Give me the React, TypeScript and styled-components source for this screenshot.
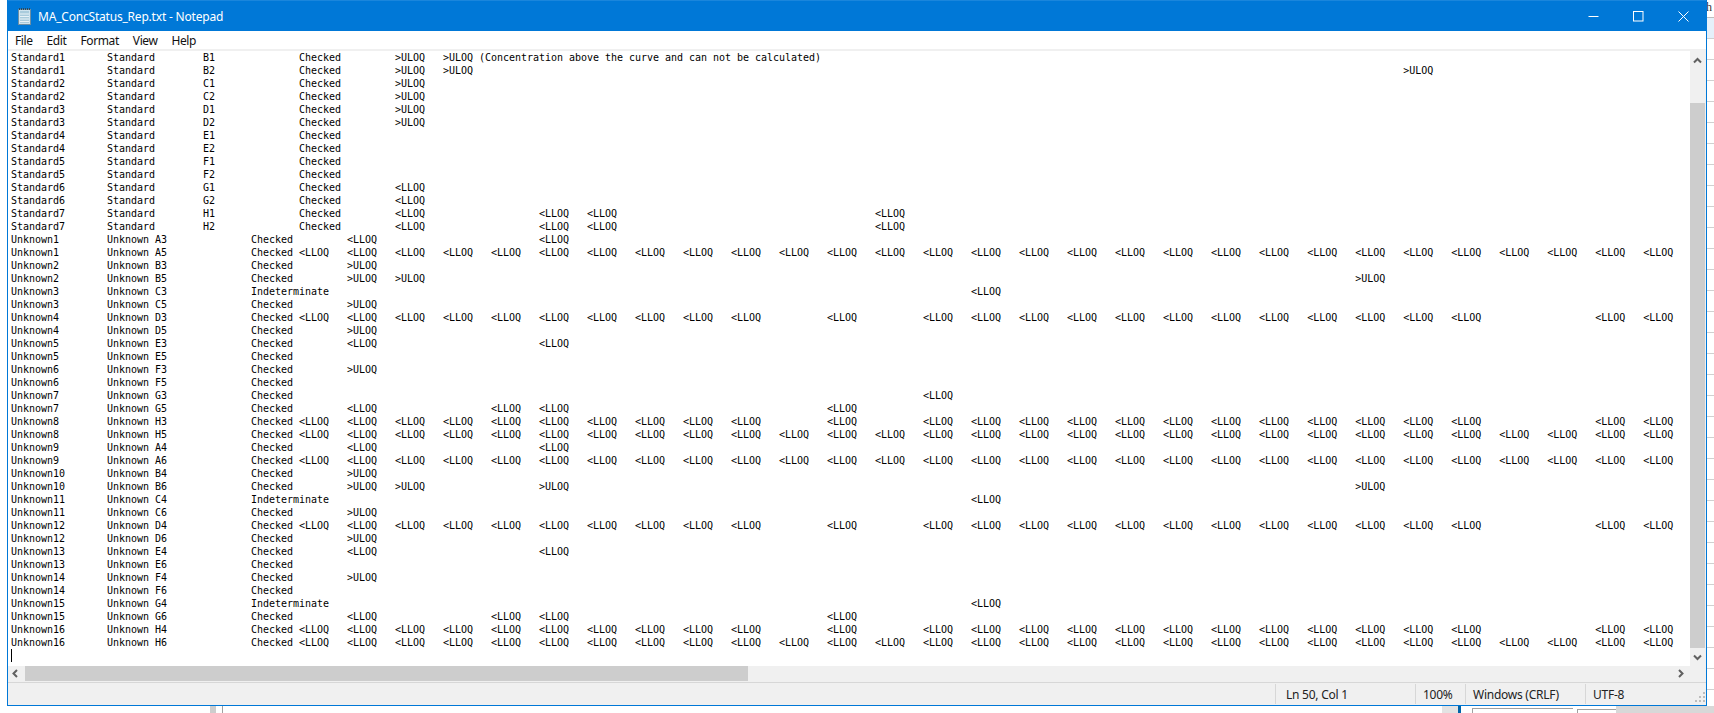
import React from 'react'
import styled, { createGlobalStyle } from 'styled-components'

const GlobalStyle = createGlobalStyle`
  html, body {
    margin: 0;
    padding: 0;
    background: #fff;
    overflow: hidden;
  }
`

const L = '<LLOQ'
const U = '>ULOQ'

// which report columns hold a value, counted from the tab stop after the status
const allCols = Array.from({ length: 29 }, (_, i) => i)
const fullRow = allCols.map(() => L)
const gapRow = allCols.map((i) => ([10, 12, 25, 26].includes(i) ? '' : L))
const sparse = (cells: Record<number, string>) => {
  const last = Math.max(-1, ...Object.keys(cells).map(Number))
  return Array.from({ length: last + 1 }, (_, i) => cells[i] ?? '')
}

const std = (name: string, well: string, cells: string[] = []) =>
  [name, 'Standard', well, '', 'Checked', '', ...cells].join('\t')
const unk = (name: string, well: string, cells: string[] = [], status = 'Checked') =>
  [name, `Unknown ${well}`, '', status, ...cells].join('\t')

const lines = [
  std('Standard1', 'B1', [U, `${U} (Concentration above the curve and can not be calculated)`]),
  std('Standard1', 'B2', sparse({ 0: U, 1: U, 21: U })),
  std('Standard2', 'C1', [U]),
  std('Standard2', 'C2', [U]),
  std('Standard3', 'D1', [U]),
  std('Standard3', 'D2', [U]),
  std('Standard4', 'E1'),
  std('Standard4', 'E2'),
  std('Standard5', 'F1'),
  std('Standard5', 'F2'),
  std('Standard6', 'G1', [L]),
  std('Standard6', 'G2', [L]),
  std('Standard7', 'H1', sparse({ 0: L, 3: L, 4: L, 10: L })),
  std('Standard7', 'H2', sparse({ 0: L, 3: L, 4: L, 10: L })),
  unk('Unknown1', 'A3', sparse({ 1: L, 5: L })),
  unk('Unknown1', 'A5', fullRow),
  unk('Unknown2', 'B3', sparse({ 1: U })),
  unk('Unknown2', 'B5', sparse({ 1: U, 2: U, 22: U })),
  unk('Unknown3', 'C3', sparse({ 13: L }), 'Indeterminate'),
  unk('Unknown3', 'C5', sparse({ 1: U })),
  unk('Unknown4', 'D3', gapRow),
  unk('Unknown4', 'D5', sparse({ 1: U })),
  unk('Unknown5', 'E3', sparse({ 1: L, 5: L })),
  unk('Unknown5', 'E5'),
  unk('Unknown6', 'F3', sparse({ 1: U })),
  unk('Unknown6', 'F5'),
  unk('Unknown7', 'G3', sparse({ 13: L })),
  unk('Unknown7', 'G5', sparse({ 1: L, 4: L, 5: L, 11: L })),
  unk('Unknown8', 'H3', gapRow),
  unk('Unknown8', 'H5', fullRow),
  unk('Unknown9', 'A4', sparse({ 1: L, 5: L })),
  unk('Unknown9', 'A6', fullRow),
  unk('Unknown10', 'B4', sparse({ 1: U })),
  unk('Unknown10', 'B6', sparse({ 1: U, 2: U, 5: U, 22: U })),
  unk('Unknown11', 'C4', sparse({ 13: L }), 'Indeterminate'),
  unk('Unknown11', 'C6', sparse({ 1: U })),
  unk('Unknown12', 'D4', gapRow),
  unk('Unknown12', 'D6', sparse({ 1: U })),
  unk('Unknown13', 'E4', sparse({ 1: L, 5: L })),
  unk('Unknown13', 'E6'),
  unk('Unknown14', 'F4', sparse({ 1: U })),
  unk('Unknown14', 'F6'),
  unk('Unknown15', 'G4', sparse({ 13: L }), 'Indeterminate'),
  unk('Unknown15', 'G6', sparse({ 1: L, 4: L, 5: L, 11: L })),
  unk('Unknown16', 'H4', gapRow),
  unk('Unknown16', 'H6', fullRow),
]

const Desktop = styled.div`
  width: 1714px;
  height: 713px;
  display: flex;
  flex-direction: column;
  overflow: hidden;
  background: #fff;
`

const Upper = styled.div`
  height: 706px;
  display: flex;
  padding-left: 7px;
`

const Win = styled.div`
  width: 1700px;
  height: 706px;
  box-sizing: border-box;
  display: flex;
  flex-direction: column;
  border: 1px solid #0078d7;
  border-top: 0;
  background: #f0f0f0;
  font-family: 'Noto Sans', sans-serif;
`

const TitleBar = styled.div`
  height: 31px;
  flex: none;
  box-sizing: border-box;
  display: flex;
  align-items: center;
  border-top: 1px solid #1a86dc;
  background: #0078d7;
  color: #fff;
`

const TitleIcon = styled.svg`
  width: 16px;
  height: 17px;
  margin-left: 9px;
  margin-right: 5px;
`

const TitleText = styled.div`
  flex: 1;
  white-space: nowrap;
  font-size: 12px;
  letter-spacing: -0.2px;
`

const WinButton = styled.div`
  width: 45px;
  height: 30px;
  display: flex;
  align-items: center;
  justify-content: center;
`

const MenuBar = styled.div`
  height: 18px;
  flex: none;
  display: flex;
  align-items: center;
  gap: 14px;
  padding-left: 7px;
  background: #fff;
  color: #111;
  font-size: 12px;
  letter-spacing: -0.4px;
`

const EditorRow = styled.div`
  flex: 1;
  min-height: 0;
  display: flex;
  padding-top: 2px;
  background: #f0f0f0;
`

const TextArea = styled.pre`
  flex: 1;
  min-width: 0;
  margin: 0;
  padding: 0 0 0 3px;
  overflow: hidden;
  background: #fff;
  color: #000;
  font-family: 'DejaVu Sans Mono', monospace;
  font-size: 10px;
  letter-spacing: -0.02px;
  line-height: 13px;
  tab-size: 8;
  white-space: pre;
`

const Caret = styled.span`
  display: inline-block;
  width: 1px;
  height: 13px;
  background: #000;
  vertical-align: top;
`

const VScroll = styled.div`
  width: 15px;
  flex: none;
  margin-right: 1px;
  display: flex;
  flex-direction: column;
  background: #f0f0f0;
`

const ArrowCell = styled.div<{ $h?: number }>`
  flex: none;
  width: 15px;
  height: ${({ $h }) => $h ?? 15}px;
  display: flex;
  align-items: center;
  justify-content: center;
`

const VTrackGap = styled.div`
  flex: none;
  height: 34px;
`

const VThumb = styled.div`
  flex: 1;
  background: #cdcdcd;
`

const HScroll = styled.div`
  height: 15px;
  flex: none;
  margin-bottom: 1px;
  display: flex;
  background: #f0f0f0;
`

const HThumb = styled.div`
  width: 723px;
  flex: none;
  margin-left: 2px;
  background: #cdcdcd;
`

const HTrack = styled.div`
  flex: 1;
`

const HCorner = styled.div`
  width: 18px;
  flex: none;
`

const StatusBar = styled.div`
  height: 23px;
  flex: none;
  box-sizing: border-box;
  display: flex;
  align-items: center;
  justify-content: flex-end;
  border-top: 1px solid #d7d7d7;
  background: #f0f0f0;
  color: #222;
  font-size: 12px;
  letter-spacing: -0.25px;
`

const StatusCell = styled.div<{ $w: number; $pad?: number }>`
  width: ${({ $w }) => $w}px;
  height: 20px;
  box-sizing: border-box;
  flex: none;
  display: flex;
  align-items: center;
  padding-left: ${({ $pad }) => $pad ?? 7}px;
  border-left: 1px solid #d7d7d7;
  white-space: nowrap;
`

const Grip = styled.svg`
  width: 12px;
  height: 20px;
  flex: none;
`

// spreadsheet peeking out on the right of the notepad window
const SideStrip = styled.div`
  flex: 1;
  display: flex;
  flex-direction: column;
  overflow: hidden;
`

const SideHead = styled.div`
  height: 18px;
  flex: none;
  box-sizing: border-box;
  border-bottom: 1px solid #bdbdbd;
  color: #333;
  font-size: 12px;
  line-height: 15px;
  text-indent: -1px;
`

const SideBlue = styled.div`
  height: 21px;
  flex: none;
  box-sizing: border-box;
  background: #e5f0fa;
  border-bottom: 1px solid #d0d0d0;
`

const SideCells = styled.div`
  flex: 1;
  background: repeating-linear-gradient(to bottom, #fff 0, #fff 20px, #d0d0d0 20px, #d0d0d0 21px);
`

const Lower = styled.div`
  height: 7px;
  display: flex;
`

const Piece = styled.div<{ $w: number; $bg?: string; $edge?: string; $top?: number }>`
  width: ${({ $w }) => $w}px;
  flex: none;
  box-sizing: border-box;
  background: ${({ $bg }) => $bg ?? '#fff'};
  ${({ $edge }) => ($edge ? `border-left: 1px solid ${$edge};` : '')}
  ${({ $edge, $top }) => ($top !== undefined ? `margin-top: ${$top}px; border-top: 1px solid ${$edge};` : '')}
`

const Chevron = ({ d }: { d: string }) => (
  <svg width="9" height="9" viewBox="0 0 9 9" fill="none" stroke="#606060" strokeWidth="2">
    <path d={d} />
  </svg>
)

export default function App() {
  return (
    <Desktop>
      <GlobalStyle />
      <Upper>
        <Win>
          <TitleBar>
            <TitleIcon viewBox="0 0 16 17">
              <rect x="1.5" y="1.5" width="12" height="15" fill="#cfe3ee" stroke="#6f8fa3" />
              <rect x="3" y="3" width="9" height="12" fill="#a9cbdc" />
              <path d="M3 6h9M3 8.5h9M3 11h9M3 13.5h9" stroke="#e8f2f7" />
              <path d="M2 1h11" stroke="#2f4858" strokeDasharray="1 1" strokeWidth="2" />
            </TitleIcon>
            <TitleText>MA_ConcStatus_Rep.txt - Notepad</TitleText>
            <WinButton>
              <svg width="11" height="11" viewBox="0 0 11 11"><path d="M0.5 5.5h10" stroke="#fff" /></svg>
            </WinButton>
            <WinButton>
              <svg width="11" height="11" viewBox="0 0 11 11"><rect x="0.5" y="0.5" width="9.5" height="9.5" fill="none" stroke="#fff" /></svg>
            </WinButton>
            <WinButton>
              <svg width="11" height="11" viewBox="0 0 11 11"><path d="M0.5 0.5l10 10M10.5 0.5l-10 10" stroke="#fff" /></svg>
            </WinButton>
          </TitleBar>
          <MenuBar>
            <span>File</span>
            <span>Edit</span>
            <span>Format</span>
            <span>View</span>
            <span>Help</span>
          </MenuBar>
          <EditorRow>
            <TextArea>
              {lines.join('\n')}
              {'\n'}
              <Caret />
            </TextArea>
            <VScroll>
              <ArrowCell $h={18}><Chevron d="M1 6.5l3.5-3.5 3.5 3.5" /></ArrowCell>
              <VTrackGap />
              <VThumb />
              <ArrowCell $h={18}><Chevron d="M1 2.5l3.5 3.5 3.5-3.5" /></ArrowCell>
            </VScroll>
          </EditorRow>
          <HScroll>
            <ArrowCell><Chevron d="M6 1L2.5 4.5 6 8" /></ArrowCell>
            <HThumb />
            <HTrack />
            <ArrowCell><Chevron d="M3 1l3.5 3.5L3 8" /></ArrowCell>
            <HCorner />
          </HScroll>
          <StatusBar>
            <StatusCell $w={140} $pad={10}>Ln 50, Col 1</StatusCell>
            <StatusCell $w={50}>100%</StatusCell>
            <StatusCell $w={120}>Windows (CRLF)</StatusCell>
            <StatusCell $w={109}>UTF-8</StatusCell>
            <Grip viewBox="0 0 12 20">
              <path d="M9 8h2v2H9zM9 12h2v2H9zM9 16h2v2H9zM5 12h2v2H5zM5 16h2v2H5zM1 16h2v2H1z" fill="#bdbdbd" />
            </Grip>
          </StatusBar>
        </Win>
        <SideStrip>
          <SideHead>h</SideHead>
          <SideBlue />
          <SideCells />
        </SideStrip>
      </Upper>
      <Lower>
        <Piece $w={210} />
        <Piece $w={6} $bg="#cdcdcd" />
        <Piece $w={6} />
        <Piece $w={1220} $edge="#a0a0a0" />
        <Piece $w={16} $bg="#e3e3e3" />
        <Piece $w={3} $bg="#0063a8" />
        <Piece $w={11} />
        <Piece $w={101} $edge="#a0a0a0" $top={2} />
        <Piece $w={4} />
        <Piece $w={39} $edge="#a0a0a0" $top={3} />
        <Piece $w={98} $bg="#d8d8d8" />
      </Lower>
    </Desktop>
  )
}
